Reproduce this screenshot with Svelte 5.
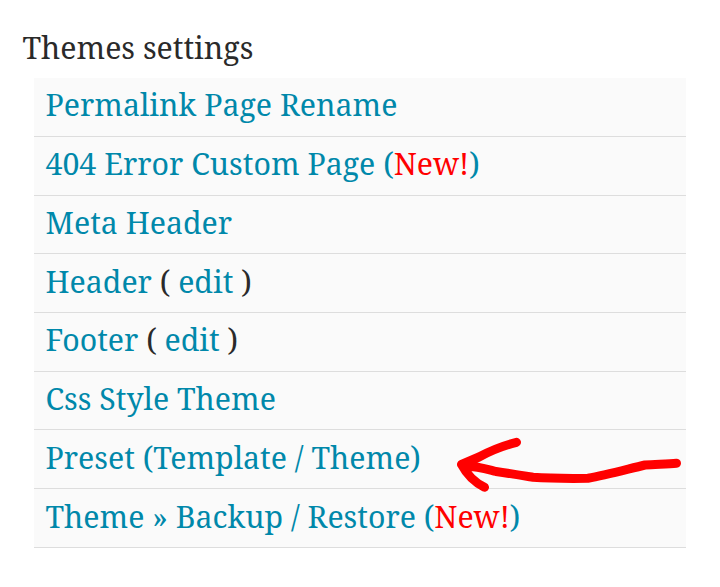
<script>
  const items = [
    { label: 'Permalink Page Rename' },
    { label: '404 Error Custom Page', isNew: true },
    { label: 'Meta Header' },
    { label: 'Header', edit: true },
    { label: 'Footer', edit: true },
    { label: 'Css Style Theme' },
    { label: 'Preset (Template / Theme)', arrow: true },
    { label: 'Theme » Backup / Restore', isNew: true }
  ]
</script>

<section class="settings">
  <h2 class="title">Themes settings</h2>

  <ul class="list">
    {#each items as { label, isNew, edit, arrow }}
      <li class="item">
        <a href="#top">{label}{#if isNew}{' '}(<span class="new">New!</span>){/if}</a>
        {#if edit}( <a href="#top">edit</a> ){/if}
        {#if arrow}
          <svg class="arrow" width="232" height="62" viewBox="452 435 232 62">
            <path d="M516.5 442.3 C500 446.5 488 452 479 457 L461.5 464.5 C466 473 474 482 484.5 487.3 M461.5 464.5 L466 466 C478 466.5 486 469 496 471.5 C510 473.5 522 475.5 533 477.3 C550 478.5 570 478.5 588 478.3 C606 475 628 469 645 465 C656 464.3 668 464 676.5 463.3" />
          </svg>
        {/if}
      </li>
    {/each}
  </ul>
</section>

<style>

:global(body) {
  background: #fff;
}

.settings {
  padding: 18px 34px 0;

  font-family: "Noto Serif", "Droid Serif", "DejaVu Serif", serif;
  font-size: 30.3px;
  color: #2a2a2a;
}

.title {
  height: 60.08px;
  margin: 0 0 0 -11.5px;

  font-size: inherit;
  font-weight: 400;
  line-height: 60px;
}

.list {
  margin: 0;
  padding: 0;
  list-style: none;
}

.item {
  position: relative;
  box-sizing: border-box;
  height: 58.735px;
  padding: 0.36px 0 0 11.5px;

  line-height: 54.4px;
  white-space: nowrap;

  background: #fafafa;
  border-bottom: 1px solid #ddd;
}

.item a {
  color: #0088aa;
  text-decoration: none;
}

.item .new {
  color: #f00;
}

/* hand drawn pointer, runs over the next row too */
.arrow {
  position: absolute;
  z-index: 1;
  top: 5px;
  right: 2px;

  fill: none;
  stroke: #f00;
  stroke-width: 9;
  stroke-linecap: round;
  stroke-linejoin: round;
}

</style>
